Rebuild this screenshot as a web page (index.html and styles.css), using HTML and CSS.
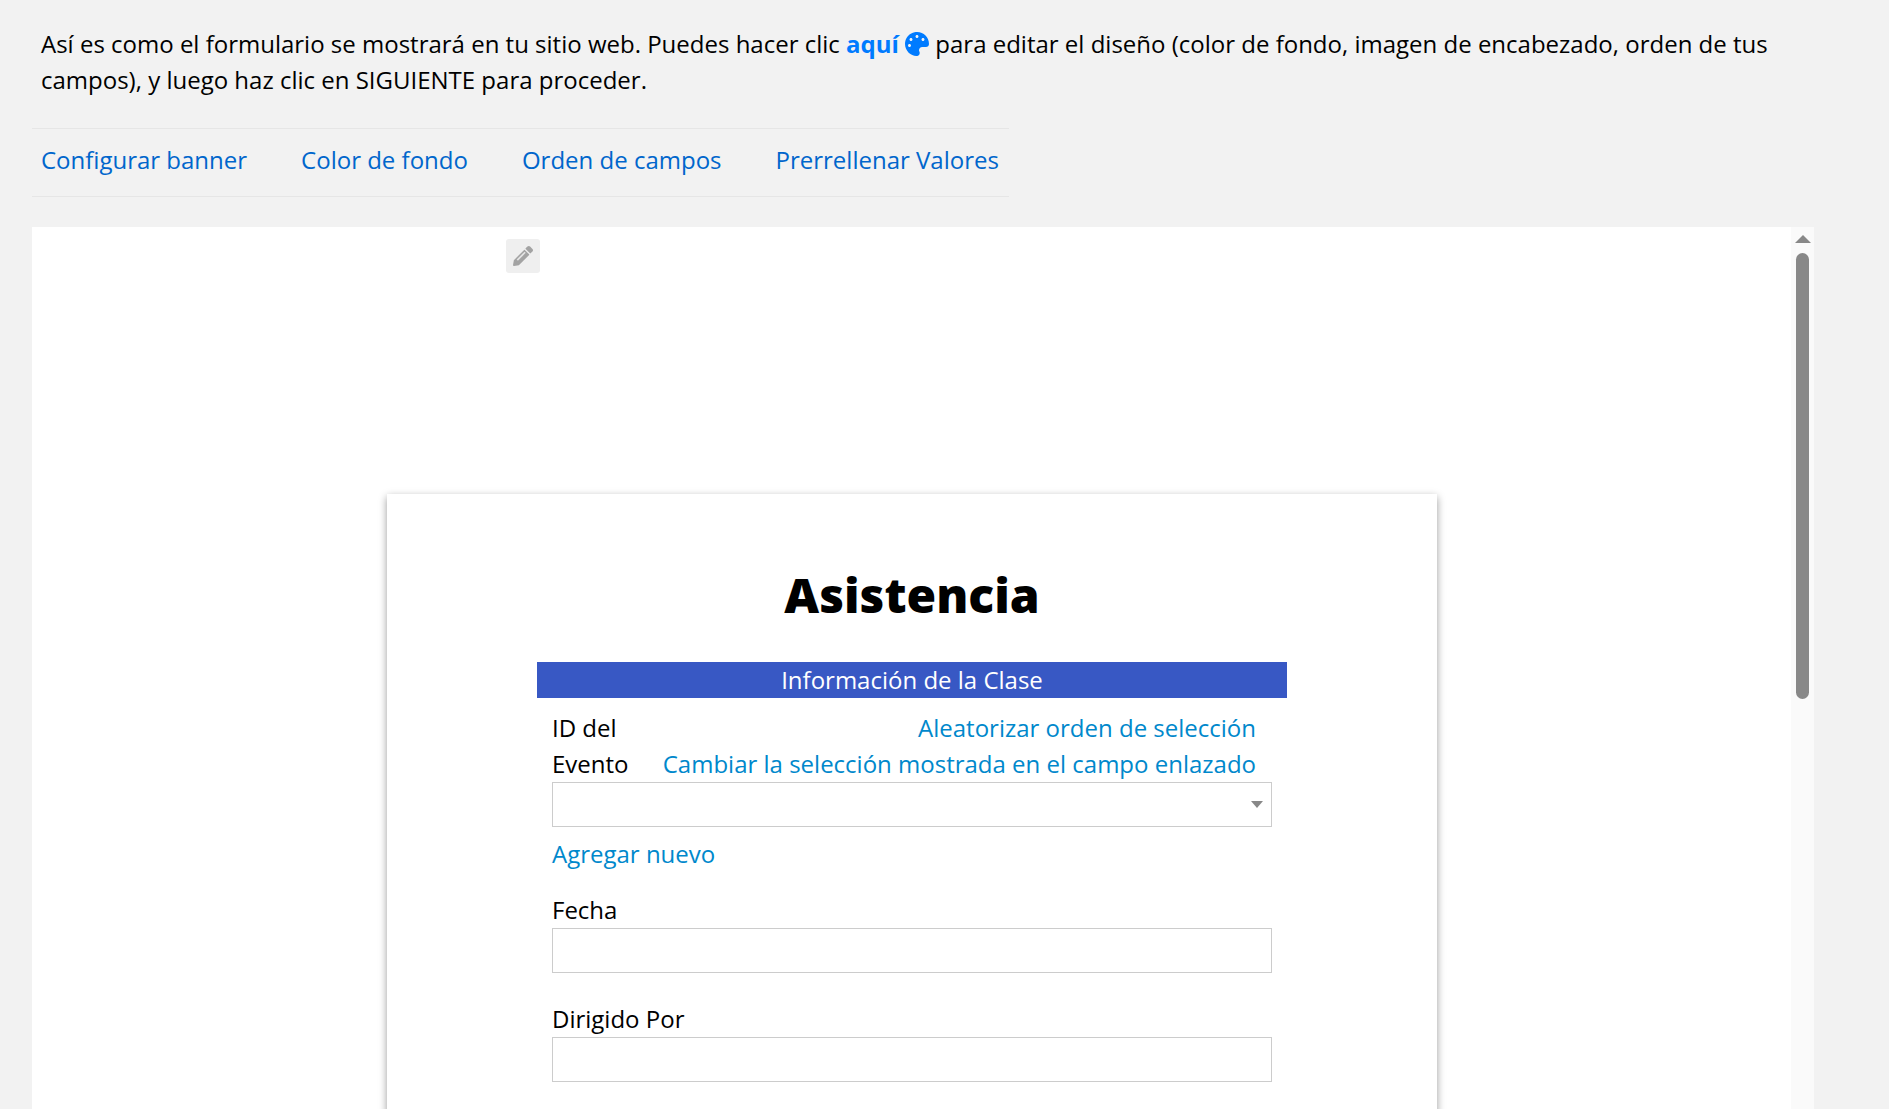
FILE: index.html
```html
<!DOCTYPE html>
<html lang="es">
<head>
    <meta charset="UTF-8">
    <title>Asistencia</title>
    <link rel="stylesheet" href="styles.css">
</head>
<body>
    <p class="intro">Así es como el formulario se mostrará en tu sitio web. Puedes hacer clic <a class="here">aquí</a> <svg class="palette" viewBox="0 0 512 512"><path fill-rule="evenodd" d="M204.3 5C104.9 24.4 24.8 104.3 5.2 203.4c-37 187 131.7 326.4 258.8 306.7 41.2-6.4 61.4-54.6 42.5-91.7-23.1-45.4 9.9-98.4 60.9-98.4h79.7c35.8 0 64.8-29.6 64.9-65.3C511.5 97.1 368.1-26.9 204.3 5zM96 320c-17.7 0-32-14.3-32-32s14.3-32 32-32 32 14.3 32 32-14.3 32-32 32zm32-128c-17.7 0-32-14.3-32-32s14.3-32 32-32 32 14.3 32 32-14.3 32-32 32zm128-64c-17.7 0-32-14.3-32-32s14.3-32 32-32 32 14.3 32 32-14.3 32-32 32zm128 64c-17.7 0-32-14.3-32-32s14.3-32 32-32 32 14.3 32 32-14.3 32-32 32z"/></svg> para editar el diseño (color de fondo, imagen de encabezado, orden de tus campos), y luego haz clic en SIGUIENTE para proceder.</p>
    <div class="tabs">
        <a>Configurar banner</a>
        <a>Color de fondo</a>
        <a>Orden de campos</a>
        <a>Prerrellenar Valores</a>
    </div>
    <div class="frame">
        <div class="preview">
            <div class="banner-edit">
                <div class="edit-btn">
                    <svg viewBox="0 0 512 512"><path d="M497.9 142.1l-46.1 46.1c-4.7 4.7-12.3 4.7-17 0l-111-111c-4.7-4.7-4.7-12.3 0-17l46.1-46.1c18.7-18.7 49.1-18.7 67.9 0l60.1 60.1c18.8 18.7 18.8 49.1 0 67.9zM284.2 99.8L21.6 362.4.4 483.9c-2.9 16.4 11.4 30.6 27.8 27.8l121.5-21.3 262.6-262.6c4.7-4.7 4.7-12.3 0-17l-111-111c-4.8-4.7-12.4-4.7-17.1 0z"/><path class="stripe" d="M110 360L310 160"/></svg>
                </div>
            </div>
            <div class="card">
                <h1>Asistencia</h1>
                <div class="section">Información de la Clase</div>
                <div class="fields">
                    <div class="link-row">
                        <label class="id-label">ID del Evento</label>
                        <div class="links">
                            <a>Aleatorizar orden de selección</a>
                            <a>Cambiar la selección mostrada en el campo enlazado</a>
                        </div>
                    </div>
                    <div class="box select"><span class="caret"></span></div>
                    <a class="add-new">Agregar nuevo</a>
                    <label class="field-label">Fecha</label>
                    <div class="box"></div>
                    <label class="field-label">Dirigido Por</label>
                    <div class="box"></div>
                </div>
            </div>
        </div>
        <div class="scrollbar">
            <span class="arrow"></span>
            <span class="thumb"></span>
        </div>
    </div>
</body>
</html>
```

FILE: styles.css
```css
body
{
    margin: 0;
    height: 1109px;
    overflow: hidden;
    background-color: #f2f2f2;
    color: #000;
    font-family: "Open Sans", sans-serif;
    font-size: 24px;
    line-height: 36px;
    padding: 0 32px;
    box-sizing: border-box;
}
a
{
    cursor: pointer;
}
.intro
{
    margin: 26px 0 0;
    padding: 0 8px 0 9px;
    width: 1750px;
}
.here
{
    color: #007bff;
    font-weight: 700;
}
.palette
{
    width: 24px;
    height: 24px;
    fill: #007bff;
    vertical-align: -3px;
}
.tabs
{
    display: flex;
    gap: 54px;
    width: 977px;
    box-sizing: border-box;
    margin-top: 30px;
    padding: 13px 8px 18px 9px;
    border-top: 1px solid #e6e6e6;
    border-bottom: 1px solid #e6e6e6;
    color: #0066cc;
    white-space: nowrap;
}
.frame
{
    display: flex;
    width: 1782px;
    height: 882px;
    margin-top: 30px;
    background-color: #fff;
    overflow: hidden;
}
.preview
{
    flex: 1;
}
.banner-edit
{
    height: 267px;
    padding: 12px 0 0 474px;
    box-sizing: border-box;
}
.edit-btn
{
    width: 34px;
    height: 34px;
    background-color: #efefef;
    border-radius: 3px;
    display: flex;
    align-items: center;
    justify-content: center;
}
.edit-btn svg
{
    width: 20px;
    height: 20px;
    fill: #a3a3a3;
}
.edit-btn .stripe
{
    stroke: #e4e4e4;
    stroke-width: 44;
}
.card
{
    width: 1050px;
    margin-left: 355px;
    padding: 66px 150px 0;
    box-sizing: border-box;
    height: 700px;
    background-color: #fff;
    box-shadow: 0 3px 8px rgba(0, 0, 0, 0.4);
}
h1
{
    margin: 0;
    text-align: center;
    font-size: 48px;
    line-height: 70px;
    font-weight: 800;
}
.section
{
    margin-top: 32px;
    height: 36px;
    background-color: #3858c4;
    color: #fff;
    text-align: center;
}
.fields
{
    padding: 12px 15px 0;
}
.link-row
{
    display: flex;
    justify-content: space-between;
}
.id-label
{
    width: 90px;
}
.links
{
    display: flex;
    flex-direction: column;
    align-items: flex-end;
    padding-right: 16px;
}
.links a, .add-new
{
    color: #0088cc;
}
.box
{
    height: 45px;
    box-sizing: border-box;
    border: 1px solid #ccc;
    background-color: #fff;
}
.select
{
    display: flex;
    align-items: center;
    justify-content: flex-end;
    padding-right: 8px;
}
.caret
{
    width: 0;
    height: 0;
    border-left: 6px solid transparent;
    border-right: 6px solid transparent;
    border-top: 7px solid #888;
}
.add-new
{
    display: block;
    margin-top: 9px;
}
.field-label
{
    display: block;
    margin-top: 20px;
}
.box + .field-label
{
    margin-top: 28px;
}
.scrollbar
{
    width: 23px;
    background-color: #fafafa;
    display: flex;
    flex-direction: column;
    align-items: center;
}
.arrow
{
    margin-top: 8px;
    width: 0;
    height: 0;
    border-left: 8px solid transparent;
    border-right: 8px solid transparent;
    border-bottom: 8px solid #888;
}
.thumb
{
    margin-top: 10px;
    width: 13px;
    height: 446px;
    border-radius: 7px;
    background-color: #888;
}
```
